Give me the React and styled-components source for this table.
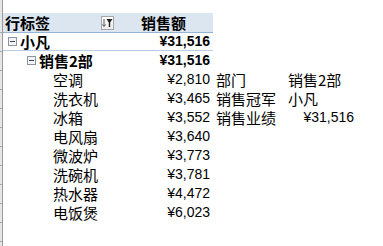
import React from "react";
import styled, { createGlobalStyle } from "styled-components";

const items = [
  ["空调", "¥2,810", "部门", "销售2部"],
  ["洗衣机", "¥3,465", "销售冠军", "小凡"],
  ["冰箱", "¥3,552", "销售业绩", "¥31,516"],
  ["电风扇", "¥3,640"],
  ["微波炉", "¥3,773"],
  ["洗碗机", "¥3,781"],
  ["热水器", "¥4,472"],
  ["电饭煲", "¥6,023"],
];

const Collapse = () => (
  <CollapseBox>
    <svg width="9" height="9" viewBox="0 0 9 9">
      <rect x="0.5" y="0.5" width="8" height="8" fill="#f4f5f7" stroke="#8c93a0" />
      <line x1="2" y1="4.5" x2="7" y2="4.5" stroke="#3b4a5e" strokeWidth="1" />
    </svg>
  </CollapseBox>
);

const App = () => {
  return (
    <>
      <GlobalStyle />
      <Page>
        <RowHeaders>
          {Array.from({ length: 13 }).map((_, i) => (
            <RowTick key={i} />
          ))}
        </RowHeaders>
        <Sheet>
          <TopGap />
          <Row>
            <HeaderCell>
              <span>行标签</span>
              <FilterButton>
                <svg width="11" height="10" viewBox="0 0 11 10">
                  <line x1="2" y1="1" x2="2" y2="8" stroke="#555" strokeWidth="1" />
                  <path d="M0.5 6.5 L2 8.5 L3.5 6.5" fill="none" stroke="#555" strokeWidth="1" />
                  <path d="M4.5 1 H10.5 L8.2 4.5 V9 H6.8 V4.5 Z" fill="#222" />
                </svg>
              </FilterButton>
            </HeaderCell>
            <HeaderCell $right>销售额</HeaderCell>
          </Row>
          <Row $line="#b8cce4">
            <Label $bold $indent={5}>
              <Collapse />
              小凡
            </Label>
            <Value $bold>¥31,516</Value>
          </Row>
          <Row>
            <Label $bold $indent={24}>
              <Collapse />
              销售2部
            </Label>
            <Value $bold>¥31,516</Value>
          </Row>
          {items.map(([name, amount, key, val]) => (
            <Row key={name}>
              <Label $indent={50}>{name}</Label>
              <Value>{amount}</Value>
              {key && <Side>{key}</Side>}
              {key && <SideValue $num={val.startsWith("¥")}>{val}</SideValue>}
            </Row>
          ))}
        </Sheet>
      </Page>
    </>
  );
};

export default App;

const GlobalStyle = createGlobalStyle`
  html, body {
    margin: 0;
    padding: 0;
    background: #ffffff;
  }
  body {
    font-family: "Liberation Sans", "Noto Sans CJK SC", sans-serif;
    color: #000;
  }
`;

const Page = styled.div`
  display: flex;
  width: 383px;
  height: 246px;
  overflow: hidden;
  background: #fff;
`;

const RowHeaders = styled.div`
  width: 2px;
  flex: none;
  background: #e6e6e6;
  border-right: 1px solid #9b9b9b;
  display: flex;
  flex-direction: column;
  padding-top: 13px;
`;

const RowTick = styled.div`
  height: 18px;
  flex: none;
  border-top: 1px solid #a8a8a8;
  &:first-child {
    border-top-color: transparent;
  }
`;

const Sheet = styled.div`
  display: flex;
  flex-direction: column;
  flex: 1;
`;

const TopGap = styled.div`
  height: 13px;
`;

const Row = styled.div`
  display: grid;
  grid-template-columns: 112px 98px 72px 72px;
  height: 19px;
  box-sizing: border-box;
  position: relative;
  &::after {
    content: "";
    position: absolute;
    left: 0;
    width: 210px;
    bottom: 0;
    height: 1px;
    background: ${(p) => p.$line || "transparent"};
  }
`;

const HeaderCell = styled.div`
  background: #dce6f1;
  border-bottom: 1px solid #95b3d7;
  box-sizing: border-box;
  display: flex;
  align-items: center;
  justify-content: ${(p) => (p.$right ? "flex-start" : "space-between")};
  padding: ${(p) => (p.$right ? "0 0 0 26px" : "0 0 0 2px")};
  font-family: "Noto Sans CJK SC", sans-serif;
  font-weight: 700;
  font-size: 15px;
  line-height: 19px;
`;

const FilterButton = styled.div`
  width: 11px;
  height: 12px;
  border: 1px solid #a6a6a6;
  background: linear-gradient(#ffffff, #ececec);
  display: flex;
  align-items: center;
  justify-content: center;
  margin-right: 1px;
`;

const Label = styled.div`
  display: flex;
  align-items: center;
  padding-left: ${(p) => p.$indent}px;
  font-family: "Noto Sans CJK SC", sans-serif;
  font-weight: ${(p) => (p.$bold ? 700 : 400)};
  font-size: 15px;
  line-height: 19px;
  white-space: nowrap;
`;

const CollapseBox = styled.span`
  display: inline-flex;
  width: 9px;
  height: 9px;
  margin-right: 3px;
`;

const Value = styled.div`
  text-align: right;
  padding-right: 3px;
  font-size: 14px;
  font-weight: ${(p) => (p.$bold ? 700 : 400)};
  line-height: 19px;
  white-space: nowrap;
`;

const Side = styled.div`
  padding-left: 3px;
  font-family: "Noto Sans CJK SC", sans-serif;
  font-size: 15px;
  line-height: 19px;
  white-space: nowrap;
`;

const SideValue = styled.div`
  text-align: ${(p) => (p.$num ? "right" : "left")};
  padding: ${(p) => (p.$num ? "0 3px 0 0" : "0 0 0 3px")};
  font-family: ${(p) => (p.$num ? '"Liberation Sans", sans-serif' : '"Noto Sans CJK SC", sans-serif')};
  font-size: ${(p) => (p.$num ? 14 : 15)}px;
  line-height: 19px;
  white-space: nowrap;
`;
